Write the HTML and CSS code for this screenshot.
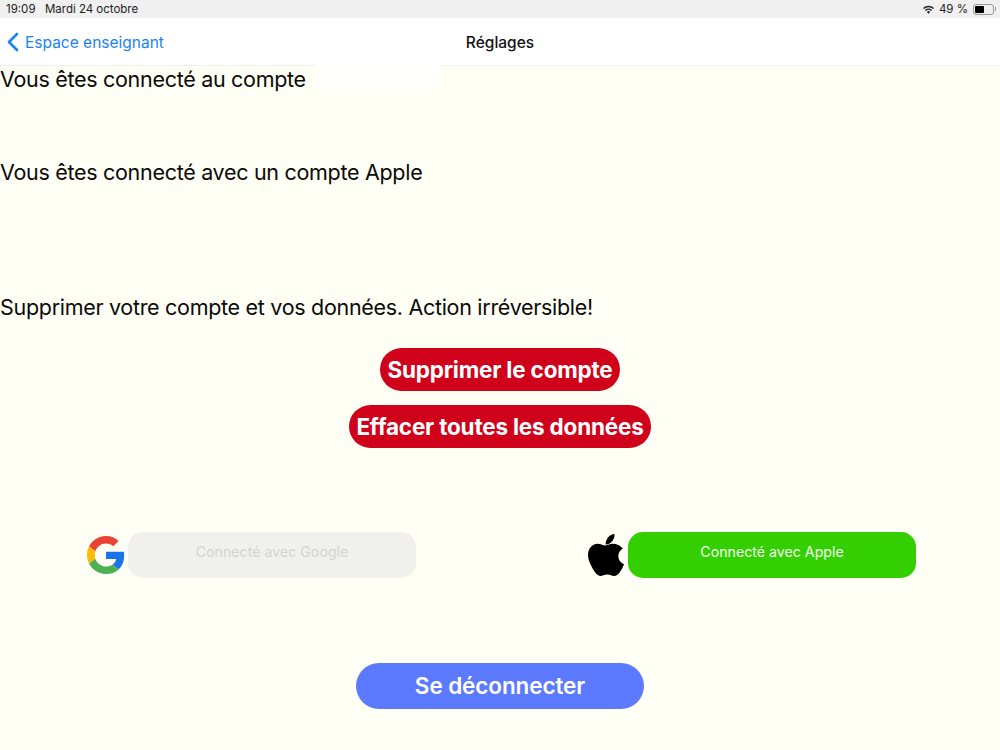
FILE: index.html
```html
<!doctype html>
<html>
<head>
	<meta charset="utf-8">
	<title>Réglages</title>
	<link rel="stylesheet" href="styles.css">
</head>
<body>
	<div class="status">
		<span class="time">19:09</span>
		<span class="date">Mardi 24 octobre</span>
		<span class="status-right">
			<svg class="wifi" width="11" height="9" viewBox="0 0 12 9"><path d="M6 9 4.200 7.100a2.600 2.600 0 0 1 3.600 0zM3.200 6.100 2.100 5a5.600 5.600 0 0 1 7.800 0L8.800 6.100a4.100 4.100 0 0 0-5.600 0zM1.100 4 0 2.900a8.600 8.600 0 0 1 12 0L10.900 4a7 7 0 0 0-9.800 0z" fill="#222"/></svg>
			<span>49 %</span>
			<span class="battery"><span class="battery-level"></span></span>
		</span>
	</div>
	<div class="nav">
		<a class="back">
			<svg width="13" height="20" viewBox="0 0 13 20"><path d="M11 2 3 10l8 8" fill="none" stroke="#1a82f7" stroke-width="2.600" stroke-linecap="round" stroke-linejoin="round"/></svg>
			Espace enseignant
		</a>
		<div class="nav-title">Réglages</div>
	</div>
	<div class="content">
		<p class="line line-account">Vous êtes connecté au compte <span class="hidden-mail"></span></p>
		<p class="line line-apple">Vous êtes connecté avec un compte Apple</p>
		<p class="line line-delete">Supprimer votre compte et vos données. Action irréversible!</p>

		<div class="danger">
			<a class="btn-red">Supprimer le compte</a>
			<a class="btn-red">Effacer toutes les données</a>
		</div>

		<div class="providers">
			<div class="provider">
				<svg class="logo" width="38" height="38" viewBox="0 0 48 48">
					<path fill="#ea4335" d="M24 9.500c3.540 0 6.710 1.220 9.210 3.600l6.850-6.850C35.900 2.380 30.470 0 24 0 14.620 0 6.510 5.380 2.560 13.220l7.980 6.190C12.430 13.720 17.740 9.500 24 9.500z"/>
					<path fill="#1a73e8" d="M46.980 24.550c0-1.570-.15-3.090-.38-4.550H24v9.020h12.940c-.58 2.960-2.260 5.480-4.780 7.180l7.730 6c4.510-4.180 7.090-10.360 7.090-17.650z"/>
					<path fill="#fbbc05" d="M10.530 28.590c-.48-1.450-.76-2.990-.76-4.590s.27-3.140.76-4.590l-7.980-6.190C.92 16.460 0 20.120 0 24c0 3.880.92 7.540 2.560 10.780l7.970-6.190z"/>
					<path fill="#4caf50" d="M24 48c6.480 0 11.930-2.130 15.890-5.810l-7.730-6c-2.150 1.450-4.920 2.300-8.160 2.300-6.260 0-11.570-4.220-13.470-9.910l-7.980 6.190C6.510 42.620 14.620 48 24 48z"/>
				</svg>
				<a class="btn-provider btn-google">Connecté avec Google</a>
			</div>
			<div class="provider">
				<svg class="logo" width="38" height="42" viewBox="0 0 38 42">
					<path fill="#000" d="M27.500 0c.3 2.800-.8 5.300-2.300 7.200-1.600 2-4 3.400-6.500 3.200-.3-2.600.9-5.300 2.300-7C22.600 1.500 25.300.2 27.500 0zM35.800 14.600c-2.700 1.700-4.500 4.300-4.500 7.500 0 3.700 2.200 6.700 5.700 8.200-.9 2.600-2.100 5-3.700 7.200-2 2.800-3.800 4.500-6.200 4.500-2.500 0-3.500-1.500-6.800-1.500-3.400 0-4.500 1.500-6.900 1.500-2.500 0-4.300-2-6.300-4.900C4 31.700 1 26.300 1 21.200 1 13.800 5.800 9.800 10.700 9.800c2.800 0 4.900 1.700 7.200 1.700 2.200 0 4.500-1.800 7.700-1.800 4.100 0 7.800 1.900 10.200 4.900z"/>
				</svg>
				<a class="btn-provider btn-apple">Connecté avec Apple</a>
			</div>
		</div>

		<div class="logout-wrap">
			<a class="btn-logout">Se déconnecter</a>
		</div>
	</div>
</body>
</html>
```

FILE: styles.css
```css
* { margin: 0; padding: 0; box-sizing: border-box; }
body { width: 1000px; height: 750px; overflow: hidden; background: #fffff5; font-family: Inter, "Liberation Sans", sans-serif; color: #000; }

.status { height: 18px; background: #f0f0f0; display: flex; align-items: center; padding: 0 6px; font-size: 11.500px; color: #222; }
.time { width: 39px; }
.date { letter-spacing: -0.02px; }
.status-right { margin-left: auto; display: flex; align-items: center; gap: 5px; }
.battery { width: 21px; height: 11px; border: 1px solid #999; border-radius: 3px; padding: 1px; display: block; position: relative; }
.battery:after { content: ""; position: absolute; right: -3px; top: 2px; width: 1px; height: 4px; background: #999; }
.battery-level { display: block; width: 9px; height: 7px; background: #000; border-radius: 1px; }

.nav { height: 48px; background: #fff; border-bottom: 1px solid #eeeeea; position: relative; display: flex; align-items: center; justify-content: center; padding-top: 1px; }
.nav-title { font-size: 15.500px; font-weight: 500; color: #111; }
.back { position: absolute; left: 6px; top: 14px; display: flex; align-items: center; gap: 6px; font-size: 15.500px; color: #1a82f7; }

.content { height: 684px; }
.line { font-size: 21.500px; letter-spacing: -0.3px; line-height: 26px; color: #0a0a0a; }
.line-account { position: relative; }
.line-apple { margin-top: 67px; }
.line-delete { margin-top: 109px; }
.hidden-mail { position: absolute; left: 315px; top: -1px; width: 125px; height: 24px; background: #fffffb; }

.danger { margin-top: 28px; display: flex; flex-direction: column; align-items: center; gap: 14px; }
.btn-red { height: 43px; padding: 0 7px; border-radius: 22px; background: #d0021b; color: #fff; font-size: 22.500px; letter-spacing: -0.2px; font-weight: 700; line-height: 43px; }

.providers { margin-top: 84px; padding: 0 84px 0 87px; display: flex; justify-content: space-between; }
.provider { display: flex; align-items: center; gap: 3px; }
.btn-provider { width: 288px; height: 46px; border-radius: 15px; font-size: 14.200px; text-align: center; line-height: 40px; }
.btn-google { background: #f0f1ed; color: #d3d3d1; }
.btn-apple { background: #33cf00; color: #f4fff0; }

.logout-wrap { margin-top: 85px; display: flex; justify-content: center; }
.btn-logout { width: 288px; height: 46px; border-radius: 23px; background: #5c7aff; color: #fff; font-size: 22.500px; letter-spacing: -0.1px; font-weight: 600; text-align: center; line-height: 45px; }
```
